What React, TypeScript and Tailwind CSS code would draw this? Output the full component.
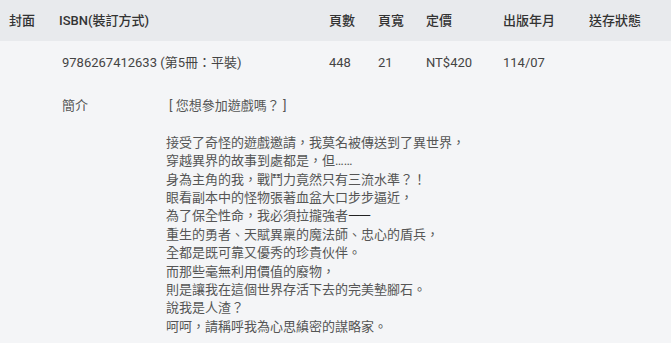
const columns = [
  { label: "封面", w: "w-[59px] pl-[9px]" },
  { label: "ISBN(裝訂方式)", w: "w-[270px]" },
  { label: "頁數", w: "w-[49px]" },
  { label: "頁寬", w: "w-[48px]" },
  { label: "定價", w: "w-[77px]" },
  { label: "出版年月", w: "w-[86px]" },
  { label: "送存狀態", w: "flex-1" },
];

const row = ["", "9786267412633 (第5冊：平裝)", "448", "21", "NT$420", "114/07", ""];

const before = `接受了奇怪的遊戲邀請，我莫名被傳送到了異世界，
穿越異界的故事到處都是，但……
身為主角的我，戰鬥力竟然只有三流水準？！
眼看副本中的怪物張著血盆大口步步逼近，
為了保全性命，我必須拉攏強者`;

const after = `
重生的勇者、天賦異稟的魔法師、忠心的盾兵，
全都是既可靠又優秀的珍貴伙伴。
而那些毫無利用價值的廢物，
則是讓我在這個世界存活下去的完美墊腳石。
說我是人渣？
呵呵，請稱呼我為心思縝密的謀略家。`;

export default function App() {
  return (
    <div
      lang="zh-Hant-TW"
      className="w-[671px] h-[343px] overflow-hidden bg-[#f4f5f7] text-[13px]"
      style={{ fontFamily: '"Roboto", "Noto Sans CJK TC", sans-serif' }}
    >
      <div className="flex items-center h-[41px] bg-[#e8eaed] text-[#333] font-medium">
        {columns.map((c) => (
          <div key={c.label} className={c.w}>
            {c.label}
          </div>
        ))}
      </div>
      <div className="flex items-center h-[44px] text-[#444]">
        {columns.map((c, i) => (
          <div key={c.label} className={i === 1 ? c.w + " pl-[3px]" : c.w}>
            {row[i]}
          </div>
        ))}
      </div>
      <div className="flex pt-[12px] pl-[62px] text-[#555] leading-[18.4px]">
        <div className="w-[104px] shrink-0">簡介</div>
        <div className="whitespace-pre-line">
          <div className="pl-[3px]">[ 您想參加遊戲嗎？ ]</div>
          <div className="h-[18.4px]" />
          <div>
            {before}
            <span
              className="inline-block ml-[1px] mr-[4px] font-bold text-[#222] origin-left scale-x-[1.35]"
              style={{ fontFamily: '"DejaVu Sans", sans-serif' }}
            >
              ──
            </span>
            {after}
          </div>
        </div>
      </div>
    </div>
  );
}
